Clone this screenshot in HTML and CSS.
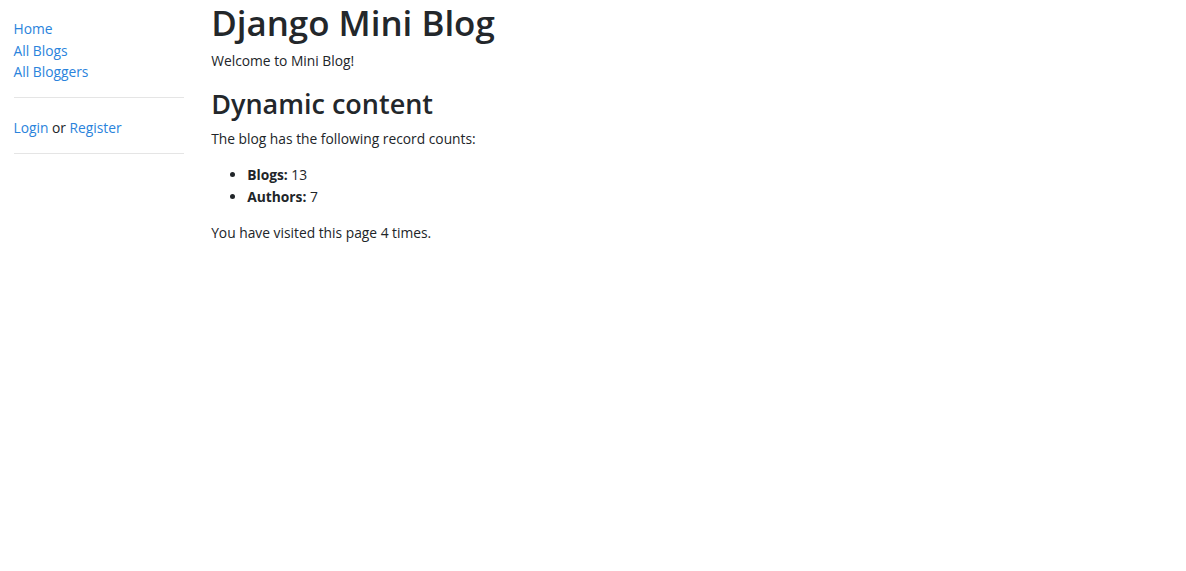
FILE: index.html
```html
<!DOCTYPE html>
<html lang="en">
<head>
<meta charset="utf-8">
<title>Local Library</title>
<link rel="stylesheet" href="styles.css">
</head>
<body>
<div class="container-fluid">
  <div class="row">
    <div class="col-sidebar">
      <ul class="sidebar-nav">
        <li><a href="#">Home</a></li>
        <li><a href="#">All Blogs</a></li>
        <li><a href="#">All Bloggers</a></li>
        <li class="divider"></li>
        <li class="login"><a href="#">Login</a> or <a href="#">Register</a></li>
        <li class="divider"></li>
      </ul>
    </div>
    <div class="col-main">
      <h1>Django Mini Blog</h1>
      <p>Welcome to Mini Blog!</p>
      <h2>Dynamic content</h2>
      <p>The blog has the following record counts:</p>
      <ul class="counts">
        <li><strong>Blogs:</strong> 13</li>
        <li><strong>Authors:</strong> 7</li>
      </ul>
      <p>You have visited this page 4 times.</p>
    </div>
  </div>
</div>
</body>
</html>
```
FILE: styles.css
```css
* { box-sizing: border-box; }
body {
  margin: 0;
  font-family: "Open Sans", "Noto Sans", sans-serif;
  font-size: 13.8px;
  line-height: 21.6px;
  color: #212529;
  background: #fff;
}
a { color: #2a83dc; text-decoration: none; }
.container-fluid { padding: 0 13.5px; }
.row { display: flex; margin: 0 -13.5px; }
.col-sidebar { flex: 0 0 16.6667%; max-width: 16.6667%; padding: 0 13.5px; }
.col-main { flex: 0 0 83.3333%; max-width: 83.3333%; padding: 0 13.5px; }
.sidebar-nav { margin: 18px 0 0; padding: 0; list-style: none; }
.sidebar-nav .divider { margin: 14.4px 0; height: 0; border-top: 1px solid rgba(0,0,0,.1); }
.sidebar-nav .divider + .login { margin-top: 19px; }
.login { padding: 0; }
h1, h2 { margin: 0 0 7.2px; font-weight: 600; color: #23272b; }
h1 { font-size: 34.9px; line-height: 43.2px; padding-top: 1px; height: 43.2px; }
h2 { font-size: 27px; line-height: 34.6px; padding-top: 1px; height: 34.6px; }
p { margin: 0 0 14.4px; }
.counts { margin: 0 0 14.4px; padding-left: 36px; }
strong { font-weight: 700; }
```
